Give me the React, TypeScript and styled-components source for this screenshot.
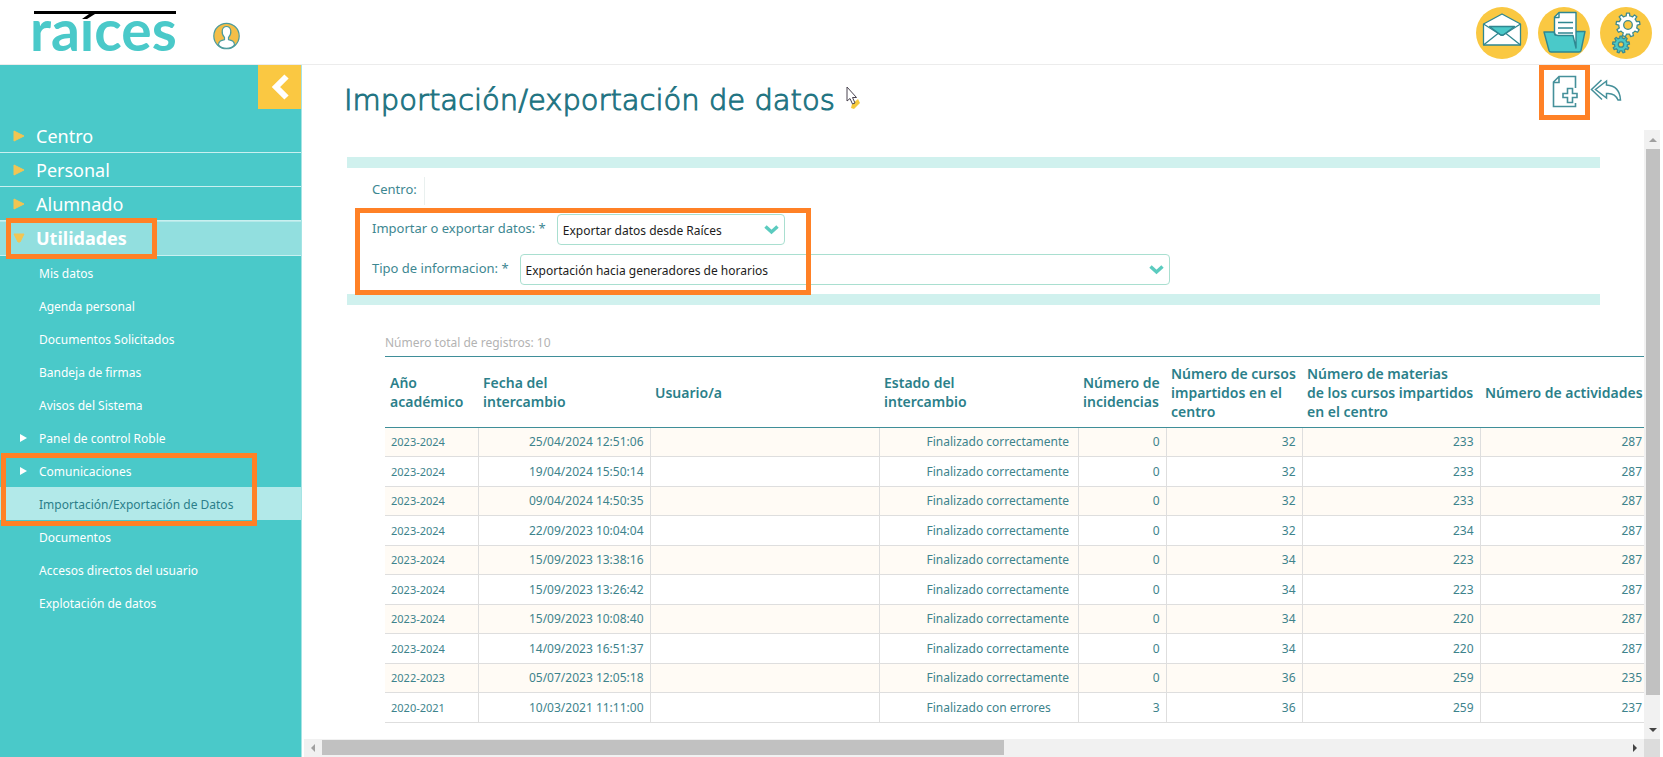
import React from "react";
import styled, { createGlobalStyle, css } from "styled-components";

const teal = "#4ac9c9";
const ink = "#2b7f8a";
const line = "#3f8e99";
const yellow = "#fac842";
const orange = "#ff8126";

const GlobalStyle = createGlobalStyle`
  * { box-sizing: border-box; }
  body {
    margin: 0;
    background: #fff;
    color: ${ink};
    font-family: "Noto Sans", "Open Sans", sans-serif;
    font-size: 12px;
  }
  button { border: 0; padding: 0; background: none; cursor: pointer; }
  svg { display: block; }
`;

const Page = styled.div`
  display: grid;
  grid-template-rows: auto 1fr;
  height: 100vh;
`;

const Header = styled.header`
  display: flex;
  align-items: flex-start;
  height: 65px;
  padding: 7px 11px 0 32px;
  border-bottom: 1px solid #ececec;
`;

const LogoDrawing = styled.svg`
  overflow: visible;
`;

const UserButton = styled.button`
  margin: 15px 0 0 35px;
`;

const HeaderActions = styled.div`
  display: flex;
  gap: 10px;
  margin-left: auto;
`;

const Body = styled.div`
  display: grid;
  grid-template-columns: 302px minmax(0, 1fr);
  min-height: 0;
`;

const Sidebar = styled.aside`
  display: flex;
  flex-direction: column;
  background: ${teal};
  border-right: 1px solid #a5e4e4;
`;

const CollapseButton = styled.button`
  display: grid;
  place-items: center;
  align-self: flex-end;
  width: 43px;
  height: 44px;
  margin-bottom: 10px;
  background: ${yellow};
`;

const Menu = styled.ul`
  margin: 0;
  padding: 0;
  list-style: none;
`;

const MenuItem = styled.li<{ $open?: boolean }>`
  position: relative;
  height: ${(p) => (p.$open ? 35 : 34)}px;
  border-bottom: 1px solid #c9f0f0;
  ${(p) => p.$open && css`
    background: #92dfdf;
    border-top: 1px solid #b5e9e9;
  `}
`;

const MenuLink = styled.a<{ $open?: boolean }>`
  display: flex;
  align-items: center;
  height: 100%;
  padding-left: 13px;
  padding-bottom: ${(p) => (p.$open ? 2 : 0)}px;
  gap: 11px;
  color: #fff;
  font-size: 18px;
  font-weight: ${(p) => (p.$open ? 700 : 400)};
  line-height: 24px;
  text-decoration: none;
`;

const SubItem = styled.li<{ $active?: boolean }>`
  position: relative;
  height: 33px;
  background: ${(p) => (p.$active ? "#b2e9e9" : "transparent")};
`;

const SubLink = styled.a<{ $active?: boolean }>`
  display: flex;
  align-items: center;
  height: 100%;
  padding-top: 2px;
  color: ${(p) => (p.$active ? ink : "#fff")};
  text-decoration: none;
`;

const SubMarker = styled.span`
  display: flex;
  width: 39px;
  padding: 0 0 2px 20px;
`;

const Highlight = styled.span`
  position: absolute;
  z-index: 2;
  border: 5px solid ${orange};
  pointer-events: none;
`;

const MenuHighlight = styled(Highlight)`
  top: -4px;
  left: 6px;
  width: 151px;
  height: 41px;
`;

const SubmenuHighlight = styled(Highlight)`
  top: -1px;
  left: 1px;
  width: 256px;
  height: 73px;
`;

const FormHighlight = styled(Highlight)`
  top: 40px;
  left: 8px;
  width: 456px;
  height: 87px;
`;

const ActionHighlight = styled(Highlight)`
  inset: 0;
`;

const Main = styled.main`
  display: grid;
  grid-template-rows: 65px minmax(0, 1fr);
  padding: 0 3px 0 2px;
  min-height: 0;
`;

const TitleBar = styled.div`
  display: flex;
  align-items: flex-start;
  padding: 0 38px 0 40px;
`;

const Title = styled.h1`
  margin: 15px 0 0;
  color: #1f7482;
  font-family: "DejaVu Sans", sans-serif;
  font-size: 29px;
  font-weight: 200;
  line-height: 40px;
  white-space: nowrap;
  -webkit-text-stroke: 1px #1f7482;
`;

const Pointer = styled.div`
  margin: 21px 0 0 11px;
`;

const TitleActions = styled.div`
  display: flex;
  margin-left: auto;
`;

const NewButton = styled.button`
  position: relative;
  display: grid;
  place-items: center;
  width: 51px;
  height: 55px;
  padding-bottom: 3px;
`;

const BackButton = styled.button`
  height: 51px;
`;

const ScrollFrame = styled.div`
  display: grid;
  grid-template-columns: minmax(0, 1fr) 16px;
  grid-template-rows: minmax(0, 1fr) 18px;
`;

const Content = styled.div`
  padding: 27px 0 0 43px;
  overflow: hidden;
`;

const Filters = styled.form`
  position: relative;
  display: grid;
  gap: 9px;
  margin-right: 44px;
  padding: 8px 0 9px 25px;
  border: solid #d0f1ee;
  border-width: 11px 0;
`;

const Field = styled.div<{ $plain?: boolean }>`
  display: flex;
  align-items: center;
  gap: ${(p) => (p.$plain ? 7 : 11)}px;
  height: ${(p) => (p.$plain ? 29 : 31)}px;
  color: #3d8791;
  font-size: 13px;
  line-height: 18px;
`;

const FieldLabel = styled.label`
  width: max-content;
  padding-bottom: 4px;
`;

const CentreValue = styled.output`
  width: 1px;
  height: 28px;
  border-left: 1px solid #e9f0ef;
`;

const SelectBox = styled.span<{ $wide?: boolean }>`
  display: grid;
  align-items: center;
  width: ${(p) => (p.$wide ? 650 : 228)}px;
  height: 31px;

  > * { grid-area: 1 / 1; }
  > svg { justify-self: end; margin-right: 6px; pointer-events: none; }
`;

const Select = styled.select`
  appearance: none;
  width: 100%;
  height: 100%;
  padding: 2px 30px 0 5px;
  border: 1px solid #a9dfd0;
  border-radius: 4px;
  background: #fff;
  color: #1c1c1c;
  font: inherit;
  font-size: 12px;
`;

const RecordCount = styled.p`
  margin: 28px 0 3px 38px;
  color: #b3b3b3;
  line-height: 20px;
`;

const TableWrap = styled.div`
  margin-left: 38px;
`;

const Table = styled.table`
  width: 100%;
  border-collapse: collapse;
  table-layout: fixed;
  color: #3d838c;
`;

const Col = styled.col<{ $w?: number }>`
  width: ${(p) => (p.$w ? `${p.$w}px` : "auto")};
`;

const HeadCell = styled.th`
  height: 71px;
  padding: 0 0 0 5px;
  border: solid ${line};
  border-width: 1px 0;
  color: ${ink};
  font-size: 14px;
  font-weight: 600;
  line-height: 19px;
  text-align: left;
  white-space: nowrap;
`;

const Row = styled.tr`
  height: 30px;
  &:nth-child(odd) { height: 29px; background: #fffbf5; }
`;

const Cell = styled.td<{ $kind?: "year" | "status" | "last" }>`
  padding: 0 6px;
  border-bottom: 1px solid #dedede;
  border-right: 1px solid #dedede;
  line-height: 18px;
  text-align: right;
  white-space: nowrap;
  ${(p) => p.$kind === "year" && css`font-size: 11px; text-align: left;`}
  ${(p) => p.$kind === "status" && css`padding-left: 47px; text-align: left;`}
  ${(p) => p.$kind === "last" && css`padding-right: 2px; border-right: 0;`}
`;

const Track = styled.div<{ $vertical?: boolean }>`
  display: flex;
  flex-direction: ${(p) => (p.$vertical ? "column" : "row")};
  padding: ${(p) => (p.$vertical ? "1px 0 0 2px" : "1px 0 2px")};
  background: #f1f1f1;
`;

const TrackArrow = styled.button`
  display: grid;
  place-items: center;
  flex: 0 0 18px;
`;

const Thumb = styled.div<{ $share: number }>`
  flex: ${(p) => p.$share} 1 0;
  background: #c1c1c1;
`;

const Rest = styled.div<{ $share: number }>`
  flex: ${(p) => p.$share} 1 0;
`;

const Corner = styled.div`
  background: #dcdcdc;
`;

function gear(cx: number, cy: number, outer: number, inner: number, teeth: number) {
  const step = (Math.PI * 2) / teeth;
  const pt = (r: number, a: number) => `${(cx + r * Math.sin(a)).toFixed(2)} ${(cy - r * Math.cos(a)).toFixed(2)}`;
  let d = "";
  for (let i = 0; i < teeth; i++) {
    const a = i * step;
    d += `${i ? "L" : "M"}${pt(inner, a - step * 0.28)}L${pt(outer, a - step * 0.18)}L${pt(outer, a + step * 0.18)}L${pt(inner, a + step * 0.28)}`;
    d += `A${inner} ${inner} 0 0 1 ${pt(inner, a + step * 0.72)}`;
  }
  return `${d}Z`;
}

const Logo = () => (
  <LogoDrawing width="146" height="50" viewBox="0 0 146 50" role="img" aria-label="raíces">
    <text x="-2" y="44" fill={teal} fontFamily="Lato" fontWeight="700" fontSize="57">raíces</text>
    <path d="M0 -3H146V14H0Z" fill="#fff" />
    <path d="M2 4H144V7H63L55 12H50L57 7H2Z" fill="#000" />
  </LogoDrawing>
);

const UserIcon = () => (
  <svg width="27" height="28" viewBox="0 0 27 28" fill="none" stroke="#4b9b9d" strokeWidth="1.2">
    <circle cx="13.500" cy="14" r="12.700" fill="#f4be48" />
    <path d="M5.500 23C5.500 19 8.500 18.300 11.500 17.600V15.500C8 12 8.300 4.500 13.500 4.500S19 12 15.500 15.500V17.600C18.500 18.300 21.500 19 21.500 23C17.500 27.500 9.500 27.500 5.500 23Z" fill="#fff" />
  </svg>
);

const MailIcon = () => (
  <svg width="52" height="52" viewBox="0 0 52 52" fill="none" stroke="#2f8791" strokeWidth="1.300" strokeLinejoin="round">
    <circle cx="26" cy="26" r="26" fill={yellow} stroke="none" />
    <path d="M7.500 17L26 7L44.500 17V38H7.500Z" fill="#fff" />
    <path d="M13.500 19.500H38.500L28 27.500Q26 29 24 27.500Z" fill={teal} />
    <path d="M7.500 17L22.500 26.500L24 27.500Q26 29 28 27.500L29.500 26.500L44.500 17M7.500 38L22 26.500M44.500 38L30 26.500" />
  </svg>
);

const FolderIcon = () => (
  <svg width="52" height="52" viewBox="0 0 52 52" fill="none" stroke="#2f8791" strokeWidth="1.400" strokeLinejoin="round">
    <circle cx="26" cy="26" r="26" fill={yellow} stroke="none" />
    <path d="M6 25H16L17 28H36L38 24.500H47L43 43.500Q42.500 45 41 45H13Q11.500 45 11 43.500Z" fill={teal} />
    <path d="M16.500 10L21 5.500H38V41L35 28.500H20Q16.500 28 16.500 25Z" fill="#fff" />
    <path d="M16.500 10.500H21V5.500M20 15.500H35M20 21H35M20 26H35" />
  </svg>
);

const GearsIcon = () => (
  <svg width="52" height="52" viewBox="0 0 52 52" stroke="#3f8b8f" strokeWidth="1.300" strokeLinejoin="round">
    <circle cx="26" cy="26" r="26" fill={yellow} stroke="none" />
    <path d={gear(28, 18, 12, 9.2, 9)} fill="#fff" />
    <circle cx="28" cy="18" r="4.300" fill={yellow} />
    <path d={gear(21, 37.5, 8.5, 6.4, 9)} fill={teal} />
    <circle cx="21" cy="37.500" r="2.700" fill={yellow} />
  </svg>
);

const NewDocumentIcon = () => (
  <svg width="26" height="33" viewBox="0 0 26 33" fill="none" stroke="#45909a" strokeWidth="1.600">
    <path d="M23.500 13V1.500H7L1.500 7V31.500H23.500V28M1.500 7.500H7V1.500" />
    <path d="M15.500 13.500H20.500V18.500H25V22.500H20.500V27.500H15.500V22.500H11V18.500H15.500Z" />
  </svg>
);

const BackIcon = () => (
  <svg width="32" height="23" viewBox="0 0 32 23" fill="none" stroke="#45909a" strokeWidth="1.500">
    <path d="M11.500 1L1.500 10.500L12 20.500" />
    <path d="M16.500 2L5.500 10.500L16.500 19V14.500C22 14 26 16 28 21H30.500C30 12 25 6.500 16.500 6Z" />
  </svg>
);

const PointerIcon = () => (
  <svg width="14" height="25" viewBox="0 0 14 25">
    <path d="M6 18L12 13L14 17L8 23L5 22Z" fill="#f6c93c" />
    <path d="M1 1V15L4 12.500L6.500 18L9 17L6.500 11.500H10.500Z" fill="#fff" stroke="#4a4450" />
  </svg>
);

const ChevronLeft = () => (
  <svg width="20" height="26" viewBox="0 0 20 26" fill="none" stroke="#fff" strokeWidth="6">
    <path d="M16.500 2.500L6 13L16.500 23.500" />
  </svg>
);

const ChevronDown = () => (
  <svg width="15" height="10" viewBox="0 0 15 10" fill="none" stroke="#5bcbbf" strokeWidth="3.500">
    <path d="M1.500 1.500L7.500 7L13.500 1.500" />
  </svg>
);

const MenuArrow = ({ open }: { open?: boolean }) => (
  <svg width="12" height="12" viewBox="0 0 12 12" fill="#f2c552" stroke="#f2c552" strokeLinejoin="round">
    <path d={open ? "M1 2H11L7 10H5Z" : "M1 1L11 6L1 11Z"} />
  </svg>
);

const SubArrow = () => (
  <svg width="7" height="8" viewBox="0 0 7 8" fill="#fff"><path d="M0 0L7 4L0 8Z" /></svg>
);

const arrowShapes = { up: "M0 6L4 2L8 6Z", down: "M0 2H8L4 6Z", left: "M6 0V8L2 4Z", right: "M2 0V8L6 4Z" };

const ScrollArrow = ({ to, label, dim }: { to: keyof typeof arrowShapes; label: string; dim?: boolean }) => (
  <TrackArrow type="button" aria-label={label}>
    <svg width="8" height="8" viewBox="0 0 8 8" fill={dim ? "#a0a0a0" : "#444"}><path d={arrowShapes[to]} /></svg>
  </TrackArrow>
);

const sections = ["Centro", "Personal", "Alumnado"];

const utilities: { name: string; nested?: boolean; active?: boolean; marked?: boolean }[] = [
  { name: "Mis datos" },
  { name: "Agenda personal" },
  { name: "Documentos Solicitados" },
  { name: "Bandeja de firmas" },
  { name: "Avisos del Sistema" },
  { name: "Panel de control Roble", nested: true },
  { name: "Comunicaciones", nested: true, marked: true },
  { name: "Importación/Exportación de Datos", active: true },
  { name: "Documentos" },
  { name: "Accesos directos del usuario" },
  { name: "Explotación de datos" },
];

const columns: { width?: number; lines: string[] }[] = [
  { width: 93, lines: ["Año", "académico"] },
  { width: 172, lines: ["Fecha del", "intercambio"] },
  { width: 229, lines: ["Usuario/a"] },
  { width: 199, lines: ["Estado del", "intercambio"] },
  { width: 88, lines: ["Número de", "incidencias"] },
  { width: 136, lines: ["Número de cursos", "impartidos en el", "centro"] },
  { width: 178, lines: ["Número de materias", "de los cursos impartidos", "en el centro"] },
  { lines: ["Número de actividades"] },
];

const ok = "Finalizado correctamente";
const records: [string, string, string, number, number, number, number][] = [
  ["2023-2024", "25/04/2024 12:51:06", ok, 0, 32, 233, 287],
  ["2023-2024", "19/04/2024 15:50:14", ok, 0, 32, 233, 287],
  ["2023-2024", "09/04/2024 14:50:35", ok, 0, 32, 233, 287],
  ["2023-2024", "22/09/2023 10:04:04", ok, 0, 32, 234, 287],
  ["2023-2024", "15/09/2023 13:38:16", ok, 0, 34, 223, 287],
  ["2023-2024", "15/09/2023 13:26:42", ok, 0, 34, 223, 287],
  ["2023-2024", "15/09/2023 10:08:40", ok, 0, 34, 220, 287],
  ["2023-2024", "14/09/2023 16:51:37", ok, 0, 34, 220, 287],
  ["2022-2023", "05/07/2023 12:05:18", ok, 0, 36, 259, 235],
  ["2020-2021", "10/03/2021 11:11:00", "Finalizado con errores", 3, 36, 259, 237],
];

export default function App() {
  return (
    <Page>
      <GlobalStyle />
      <Header>
        <Logo />
        <UserButton type="button" aria-label="Usuario"><UserIcon /></UserButton>
        <HeaderActions>
          <button type="button" aria-label="Mensajes"><MailIcon /></button>
          <button type="button" aria-label="Documentos"><FolderIcon /></button>
          <button type="button" aria-label="Configuración"><GearsIcon /></button>
        </HeaderActions>
      </Header>
      <Body>
        <Sidebar>
          <CollapseButton type="button" aria-label="Ocultar menú"><ChevronLeft /></CollapseButton>
          <nav>
            <Menu>
              {sections.map((name) => (
                <MenuItem key={name}>
                  <MenuLink href="#"><MenuArrow />{name}</MenuLink>
                </MenuItem>
              ))}
              <MenuItem $open>
                <MenuLink href="#" $open><MenuArrow open />Utilidades</MenuLink>
                <MenuHighlight />
              </MenuItem>
            </Menu>
            <Menu>
              {utilities.map((item) => (
                <SubItem key={item.name} $active={item.active}>
                  <SubLink href="#" $active={item.active}>
                    <SubMarker>{item.nested && <SubArrow />}</SubMarker>
                    {item.name}
                  </SubLink>
                  {item.marked && <SubmenuHighlight />}
                </SubItem>
              ))}
            </Menu>
          </nav>
        </Sidebar>
        <Main>
          <TitleBar>
            <Title>Importación/exportación de datos</Title>
            <Pointer><PointerIcon /></Pointer>
            <TitleActions>
              <NewButton type="button" aria-label="Nuevo">
                <NewDocumentIcon />
                <ActionHighlight />
              </NewButton>
              <BackButton type="button" aria-label="Volver"><BackIcon /></BackButton>
            </TitleActions>
          </TitleBar>
          <ScrollFrame>
            <Content>
              <Filters>
                <Field $plain>
                  <FieldLabel htmlFor="centro">Centro:</FieldLabel>
                  <CentreValue id="centro" />
                </Field>
                <Field>
                  <FieldLabel htmlFor="operacion">Importar o exportar datos: *</FieldLabel>
                  <SelectBox>
                    <Select id="operacion"><option>Exportar datos desde Raíces</option></Select>
                    <ChevronDown />
                  </SelectBox>
                </Field>
                <Field>
                  <FieldLabel htmlFor="tipo">Tipo de informacion: *</FieldLabel>
                  <SelectBox $wide>
                    <Select id="tipo"><option>Exportación hacia generadores de horarios</option></Select>
                    <ChevronDown />
                  </SelectBox>
                </Field>
                <FormHighlight />
              </Filters>
              <RecordCount>Número total de registros: 10</RecordCount>
              <TableWrap>
                <Table>
                  <colgroup>
                    {columns.map((c) => <Col key={c.lines.join(" ")} $w={c.width} />)}
                  </colgroup>
                  <thead>
                    <tr>
                      {columns.map((c) => (
                        <HeadCell key={c.lines.join(" ")} scope="col">
                          {c.lines.map((text, i) => (
                            <React.Fragment key={text}>{i > 0 && <br />}{text}</React.Fragment>
                          ))}
                        </HeadCell>
                      ))}
                    </tr>
                  </thead>
                  <tbody>
                    {records.map(([year, date, status, incidents, courses, subjects, activities]) => (
                      <Row key={date}>
                        <Cell $kind="year">{year}</Cell>
                        <Cell>{date}</Cell>
                        <Cell />
                        <Cell $kind="status">{status}</Cell>
                        <Cell>{incidents}</Cell>
                        <Cell>{courses}</Cell>
                        <Cell>{subjects}</Cell>
                        <Cell $kind="last">{activities}</Cell>
                      </Row>
                    ))}
                  </tbody>
                </Table>
              </TableWrap>
            </Content>
            <Track $vertical>
              <ScrollArrow to="up" label="Subir" dim />
              <Thumb $share={547} />
              <Rest $share={26} />
              <ScrollArrow to="down" label="Bajar" />
            </Track>
            <Track>
              <ScrollArrow to="left" label="Izquierda" dim />
              <Thumb $share={682} />
              <Rest $share={622} />
              <ScrollArrow to="right" label="Derecha" />
            </Track>
            <Corner />
          </ScrollFrame>
        </Main>
      </Body>
    </Page>
  );
}
